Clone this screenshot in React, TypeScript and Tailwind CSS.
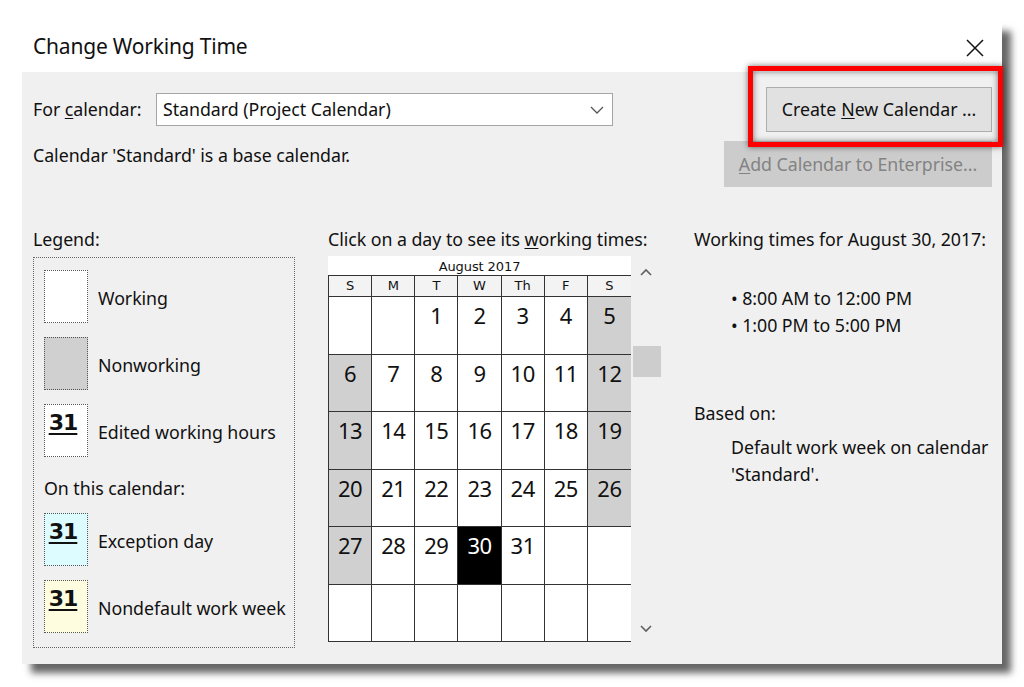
import React from "react";

const weeks: (number | null)[][] = [
  [null, null, 1, 2, 3, 4, 5],
  [6, 7, 8, 9, 10, 11, 12],
  [13, 14, 15, 16, 17, 18, 19],
  [20, 21, 22, 23, 24, 25, 26],
  [27, 28, 29, 30, 31, null, null],
  [null, null, null, null, null, null, null],
];

function Swatch({ bg, num }: { bg: string; num?: boolean }) {
  return (
    <div className={`w-[44px] h-[53px] shrink-0 border border-dotted border-[#555] ${bg} flex justify-center`}>
      {num && (
        <span className="mt-[5px] text-[22px] leading-[26px] font-bold underline decoration-2 underline-offset-[3px] font-['DejaVu_Sans',sans-serif] tracking-[-1px] mr-[6px]">
          31
        </span>
      )}
    </div>
  );
}

export default function App() {
  return (
    <div className="w-[1024px] h-[687px] bg-white pt-[22px] pl-[22px] font-['Noto_Sans',sans-serif] text-[#111] overflow-hidden">
      <div className="relative w-[980px] h-[642px] flex flex-col shadow-[9px_9px_7px_rgba(0,0,0,0.6)]">
        {/* title bar */}
        <div className="h-[50px] bg-white flex items-center justify-between pl-[11px] pr-[17px] shrink-0">
          <span className="text-[21px] tracking-[-0.2px]">Change Working Time</span>
          <svg width="20" height="18" viewBox="0 0 20 18" className="mt-[1px]">
            <path d="M2 1 L18 17 M18 1 L2 17" stroke="#111" strokeWidth="1.5" fill="none" />
          </svg>
        </div>

        {/* body */}
        <div className="flex-1 bg-[#f0f0f0] flex flex-col text-[17.8px] tracking-[-0.05px]">
          {/* top section */}
          <div className="h-[156px] flex justify-between shrink-0">
            <div className="pl-[11px] pt-[21px]">
              <div className="flex items-center">
                <span className="w-[123px]">
                  For <span className="underline underline-offset-2">c</span>alendar:
                </span>
                <div className="w-[457px] h-[33px] bg-white border border-[#a5a5a5] flex items-center justify-between pl-[6px] pr-[8px]">
                  <span>Standard (Project Calendar)</span>
                  <svg width="14" height="8" viewBox="0 0 14 8">
                    <path d="M1 1 L7 7 L13 1" stroke="#555" strokeWidth="1.3" fill="none" />
                  </svg>
                </div>
              </div>
              <div className="mt-[18px] leading-[22px]">Calendar 'Standard' is a base calendar.</div>
            </div>
            <div className="pr-[10px] pt-[15px] flex flex-col items-end gap-[9px]">
              <div className="w-[226px] h-[45px] bg-[#e1e1e1] border border-[#adadad] flex items-center justify-center">
                Create <span className="underline underline-offset-2 ml-[5px]">N</span>ew Calendar ...
              </div>
              <div className="w-[268px] h-[46px] bg-[#cccccc] border border-[#cccccc] flex items-center justify-center text-[#838383]">
                <span className="underline underline-offset-2">A</span>dd Calendar to Enterprise...
              </div>
            </div>
          </div>

          {/* columns */}
          <div className="flex pl-[11px]">
            {/* legend */}
            <div className="w-[262px] shrink-0">
              <div className="leading-[22px]">Legend:</div>
              <div className="mt-[7px] h-[391px] border border-dotted border-[#666] pl-[10px] pt-[12px] flex flex-col">
                <div className="flex items-center gap-[10px]">
                  <Swatch bg="bg-white" />
                  <span className="mt-[3px]">Working</span>
                </div>
                <div className="flex items-center gap-[10px] mt-[14px]">
                  <Swatch bg="bg-[#d0d0d0]" />
                  <span className="mt-[3px]">Nonworking</span>
                </div>
                <div className="flex items-center gap-[10px] mt-[14px]">
                  <Swatch bg="bg-white" num />
                  <span className="mt-[4px]">Edited working hours</span>
                </div>
                <div className="mt-[20px] leading-[22px]">On this calendar:</div>
                <div className="flex items-center gap-[10px] mt-[14px]">
                  <Swatch bg="bg-[#dcfcff]" num />
                  <span className="mt-[3px]">Exception day</span>
                </div>
                <div className="flex items-center gap-[10px] mt-[14px]">
                  <Swatch bg="bg-[#fefde0]" num />
                  <span className="mt-[3px]">Nondefault work week</span>
                </div>
              </div>
            </div>

            {/* calendar */}
            <div className="ml-[33px] w-[333px] shrink-0">
              <div className="leading-[22px] whitespace-nowrap">
                Click on a day to see its <span className="underline underline-offset-2">w</span>orking times:
              </div>
              <div className="mt-[6px] flex">
                <div className="w-[303px] bg-white">
                  <div className="h-[19px] flex items-center justify-center text-[13px] leading-none tracking-[-0.1px] font-['DejaVu_Sans',sans-serif] pt-[2px]">
                    August 2017
                  </div>
                  <div className="grid grid-cols-7 border-l border-t border-[#333] text-[13px] font-['DejaVu_Sans',sans-serif]">
                    {["S", "M", "T", "W", "Th", "F", "S"].map((d, i) => (
                      <div
                        key={i}
                        className={`h-[21px] bg-[#f3f3f3] border-b border-[#333] flex items-center justify-center ${i < 6 ? "border-r" : ""}`}
                      >
                        {d}
                      </div>
                    ))}
                    {weeks.map((w, ri) =>
                      w.map((d, ci) => {
                        const weekend = (ci === 0 || ci === 6) && d !== null;
                        const sel = d === 30;
                        const bg = sel ? "bg-black text-white" : weekend ? "bg-[#d0d0d0]" : "bg-white";
                        return (
                          <div
                            key={`${ri}-${ci}`}
                            className={`h-[57.5px] ${bg} border-b border-[#333] ${ci < 6 ? "border-r" : ""} flex justify-center pt-[5px] text-[22px] leading-[26px] font-['Noto_Sans',sans-serif] tracking-[-0.5px]`}
                          >
                            {d ?? ""}
                          </div>
                        );
                      })
                    )}
                  </div>
                </div>
                <div className="w-[30px] flex flex-col items-center">
                  <svg width="12" height="8" viewBox="0 0 12 8" className="mt-[12px]">
                    <path d="M1 7 L6 2 L11 7" stroke="#606060" strokeWidth="1.6" fill="none" />
                  </svg>
                  <div className="mt-[70px] w-[28px] h-[31px] bg-[#cdcdcd] ml-[1px]" />
                  <div className="flex-1" />
                  <svg width="12" height="8" viewBox="0 0 12 8" className="mb-[9px]">
                    <path d="M1 1 L6 6 L11 1" stroke="#606060" strokeWidth="1.6" fill="none" />
                  </svg>
                </div>
              </div>
            </div>

            {/* right panel */}
            <div className="ml-[33px] flex-1">
              <div className="leading-[22px] whitespace-nowrap">Working times for August 30, 2017:</div>
              <div className="mt-[35px] pl-[37px] leading-[27px]">
                <div>• 8:00 AM to 12:00 PM</div>
                <div>• 1:00 PM to 5:00 PM</div>
              </div>
              <div className="mt-[63px] leading-[22px]">Based on:</div>
              <div className="mt-[10px] pl-[37px] leading-[27px]">
                <div>Default work week on calendar</div>
                <div>'Standard'.</div>
              </div>
            </div>
          </div>
        </div>

        {/* highlight */}
        <div className="absolute left-[726px] top-[44px] w-[255px] h-[81px] border-[5px] border-[#ff0000] shadow-[0_0_6px_rgba(0,0,0,0.55),inset_0_0_6px_rgba(0,0,0,0.55)]" />
      </div>
    </div>
  );
}
